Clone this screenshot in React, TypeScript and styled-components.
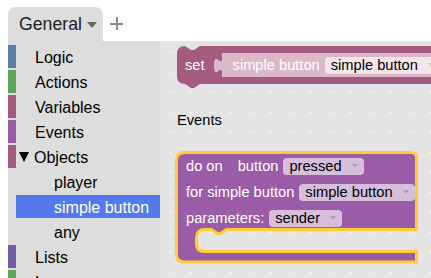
import React from "react";
import styled, { createGlobalStyle } from "styled-components";

const GlobalStyle = createGlobalStyle`
  html, body {
    margin: 0;
    padding: 0;
    background: #fff;
  }
  body {
    font-family: "Liberation Sans", Arial, sans-serif;
  }
`;

const categories = [
  { label: "Logic", color: "#5b80a5" },
  { label: "Actions", color: "#5ba55b" },
  { label: "Variables", color: "#a55b80" },
  { label: "Events", color: "#995ba5" },
  { label: "Objects", color: "#a55b80", expanded: true },
  { label: "player", sub: true },
  { label: "simple button", sub: true, selected: true },
  { label: "any", sub: true },
  { label: "Lists", color: "#745ba5" },
  { label: "Loops", color: "#5ba55b" },
];

function App() {
  return (
    <>
      <GlobalStyle />
      <Page>
        <TabBar>
          <Tab>
            General
            <Caret />
          </Tab>
          <AddTab />
        </TabBar>

        <Main>
          <Sidebar>
            {categories.map((c) => (
              <Item key={c.label}>
                <Bar $color={c.color} />
                <ItemLabel $sub={c.sub} $selected={c.selected}>
                  {c.expanded && <Toggle />}
                  {c.label}
                </ItemLabel>
              </Item>
            ))}
          </Sidebar>

          <Workspace>
            <Grid width="100%" height="100%">
              <defs>
                <pattern id="dots" width="20" height="20" patternUnits="userSpaceOnUse">
                  <path d="M9 11.5h3M10.5 10v3" stroke="#f1f1f1" strokeWidth="1" />
                </pattern>
              </defs>
              <rect width="100%" height="100%" fill="url(#dots)" />
            </Grid>

            {/* set block */}
            <Placed $x={17} $y={5}>
              <Shape width="260" height="44">
                <path
                  d="M0,8 Q0,0 8,0 l6,4 3,0 6,-4 H260 V38 H23 l-6,4 -3,0 -6,-4 H8 Q0,38 0,30 Z"
                  fill="#a55b80"
                />
                <path
                  d="M45,7 H260 V31 H45 V27 c0,-10 -8,8 -8,-7.5 s8,2.5 8,-7.5 Z"
                  fill="#dbb9c9"
                />
              </Shape>
              <SetRow>
                <Label>set</Label>
                <Label $gap={28}>simple button</Label>
                <Dropdown $bg="#f3e6ec" $arrow="#d6bccb">
                  simple button
                  <Arrow />
                </Dropdown>
              </SetRow>
            </Placed>

            <SectionTitle $x={17} $y={71}>Events</SectionTitle>

            {/* event block */}
            <Placed $x={15} $y={110}>
              <Shape width="244" height="113">
                <path
                  d="M9.5,1.5 H236 Q241.5,1.5 241.5,7 V78.5 H51.5 l-6,4 -3,0 -6,-4 H29.5 Q21.5,78.5 21.5,86.5 V92.5 Q21.5,100.5 29.5,100.5 H241.5 V111 H9.5 Q1.5,111 1.5,103 V9.5 Q1.5,1.5 9.5,1.5 Z"
                  fill="#9a5ca6"
                  stroke="#ffcc33"
                  strokeWidth="3"
                  strokeLinejoin="round"
                />
              </Shape>
              <EventRows>
                <Row>
                  <Label>do on</Label>
                  <Label $gap={10}>button</Label>
                  <Dropdown>
                    pressed
                    <Arrow />
                  </Dropdown>
                </Row>
                <Row>
                  <Label>for simple button</Label>
                  <Dropdown>
                    simple button
                    <Arrow />
                  </Dropdown>
                </Row>
                <Row>
                  <Label>parameters:</Label>
                  <Dropdown>
                    sender
                    <Arrow />
                  </Dropdown>
                </Row>
              </EventRows>
            </Placed>
          </Workspace>
        </Main>
      </Page>
    </>
  );
}

const Page = styled.div`
  width: 431px;
  height: 278px;
  overflow: hidden;
  display: flex;
  flex-direction: column;
`;

const TabBar = styled.div`
  height: 41px;
  flex: none;
  display: flex;
  align-items: flex-end;
  padding-left: 8px;
  box-sizing: border-box;
`;

const Tab = styled.div`
  width: 95px;
  height: 34px;
  box-sizing: border-box;
  padding: 0 0 0 11px;
  display: flex;
  align-items: center;
  background: #ddd;
  border-radius: 8px 8px 0 0;
  font-size: 17.7px;
  color: #222;
`;

const Caret = styled.span`
  margin-left: 5px;
  margin-top: 2px;
  border-left: 5px solid transparent;
  border-right: 5px solid transparent;
  border-top: 6px solid #666;
`;

const AddTab = styled.span`
  position: relative;
  width: 13px;
  height: 13px;
  margin: 0 0 11px 7px;
  &::before,
  &::after {
    content: "";
    position: absolute;
    background: #8a8a8a;
  }
  &::before {
    left: 0;
    top: 5.5px;
    width: 13px;
    height: 2px;
  }
  &::after {
    top: 0;
    left: 5.5px;
    width: 2px;
    height: 13px;
  }
`;

const Main = styled.div`
  flex: 1;
  min-height: 0;
  display: flex;
  padding-left: 8px;
`;

const Sidebar = styled.div`
  width: 152px;
  flex: none;
  background: #ddd;
  padding-top: 4px;
  box-sizing: border-box;
  display: flex;
  flex-direction: column;
  gap: 2px;
  overflow: hidden;
`;

const Item = styled.div`
  height: 23px;
  flex: none;
  display: flex;
`;

const Bar = styled.div<{ $color?: string }>`
  width: 8px;
  flex: none;
  background: ${(p) => p.$color || "transparent"};
`;

const ItemLabel = styled.div<{ $sub?: boolean; $selected?: boolean }>`
  flex: 1;
  display: flex;
  align-items: center;
  padding-left: ${(p) => (p.$sub ? 38 : 19)}px;
  padding-top: 2px;
  font-size: 16px;
  white-space: nowrap;
  color: ${(p) => (p.$selected ? "#fff" : "#000")};
  background: ${(p) => (p.$selected ? "#5479ec" : "transparent")};
`;

const Toggle = styled.span`
  margin-left: -16px;
  margin-right: 5px;
  margin-top: -1px;
  border-left: 5.5px solid transparent;
  border-right: 5.5px solid transparent;
  border-top: 10px solid #000;
`;

const Workspace = styled.div`
  flex: 1;
  position: relative;
  overflow: hidden;
  background: #e4e4e4;
`;

const Grid = styled.svg`
  position: absolute;
  inset: 0;
`;

const Placed = styled.div<{ $x: number; $y: number }>`
  position: absolute;
  left: ${(p) => p.$x}px;
  top: ${(p) => p.$y}px;
`;

const Shape = styled.svg`
  position: absolute;
  left: 0;
  top: 0;
  display: block;
`;

const SectionTitle = styled(Placed)`
  font-size: 14.67px;
  line-height: 17px;
  color: #000;
`;

const SetRow = styled.div`
  position: relative;
  height: 38px;
  display: flex;
  align-items: center;
  padding-left: 8px;
  white-space: nowrap;
`;

const EventRows = styled.div`
  position: relative;
  padding: 2px 0 0 11px;
  display: flex;
  flex-direction: column;
  white-space: nowrap;
`;

const Row = styled.div`
  height: 26px;
  display: flex;
  align-items: center;
  gap: 5px;
`;

const Label = styled.span<{ $gap?: number }>`
  margin-left: ${(p) => p.$gap || 0}px;
  font-size: 14.67px;
  color: #fff;
`;

const Dropdown = styled.span<{ $bg?: string; $arrow?: string }>`
  --arrow: ${(p) => p.$arrow || "#b69cbd"};
  height: 17px;
  margin-left: 5px;
  padding: 0 6px;
  display: inline-flex;
  align-items: center;
  border-radius: 4px;
  background: ${(p) => p.$bg || "#d7bedb"};
  font-size: 14.67px;
  color: #000;
  ${Row} & {
    margin-left: 0;
  }
`;

const Arrow = styled.span`
  margin-left: 10px;
  border-left: 3.5px solid transparent;
  border-right: 3.5px solid transparent;
  border-top: 4px solid var(--arrow);
`;

export default App;
